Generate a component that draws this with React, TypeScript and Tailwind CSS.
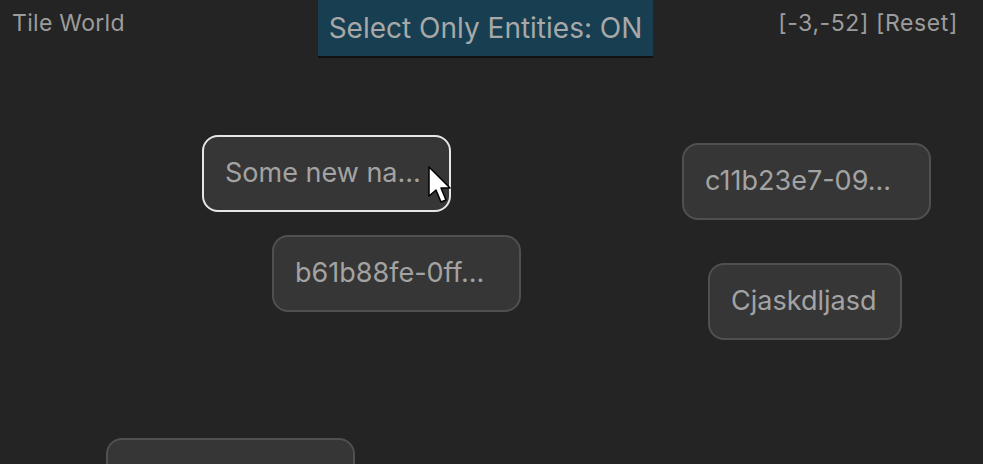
import React from 'react'

type Node = { id: string; label: string; x: number; y: number; w?: number; selected?: boolean }

const nodes: Node[] = [
  { id: 'a', label: 'Some new na...', x: 202, y: 135, selected: true },
  { id: 'b', label: 'b61b88fe-0ff...', x: 272, y: 235 },
  { id: 'c', label: 'c11b23e7-09...', x: 682, y: 143 },
  { id: 'd', label: 'Cjaskdljasd', x: 708, y: 263, w: 194 },
  { id: 'e', label: '', x: 106, y: 438 },
]

const Cursor = () => (
  <svg width="26" height="42" viewBox="0 0 26 42" className="absolute left-[427px] top-[165px]">
    <path d="M2 2 L2 31 L9 25 L14 37 L19 35 L14 23 L23 23 Z" fill="white" stroke="black" strokeWidth="1.5" strokeLinejoin="round" />
  </svg>
)

export default function App() {
  return (
    <div className="relative w-[983px] h-[464px] overflow-hidden bg-[#242424] font-['Inter','Noto_Sans',sans-serif] text-[#a3a3a3]">
      <div className="flex items-start pl-3 pr-[25px]">
        <span className="w-[306px] mt-[8px] text-[23px] leading-[30px] tracking-[0.3px] text-[#9c9c9c]">Tile World</span>
        <div className="w-[335px] h-[56px] bg-[#173f51] shadow-[0_2px_0_#111] flex items-center justify-center pb-[1px] text-[28px] text-[#a8a8a8]">
          Select Only Entities: ON
        </div>
        <span className="flex-1 text-right mt-[8px] text-[23px] leading-[30px] tracking-[0.6px] text-[#9c9c9c]">[-3,-52] [Reset]</span>
      </div>

      {nodes.map((n) => (
        <div
          key={n.id}
          className={`absolute h-[77px] rounded-[16px] bg-[#363636] flex items-center pl-[21px] text-[27px] text-[#a3a3a3] ${
            n.selected ? 'border-2 border-[#e6e6e6]' : 'border-2 border-[#505050]'
          }`}
          style={{ left: n.x, top: n.y, width: n.w ?? 249 }}
        >
          {n.label}
        </div>
      ))}

      <Cursor />
    </div>
  )
}
